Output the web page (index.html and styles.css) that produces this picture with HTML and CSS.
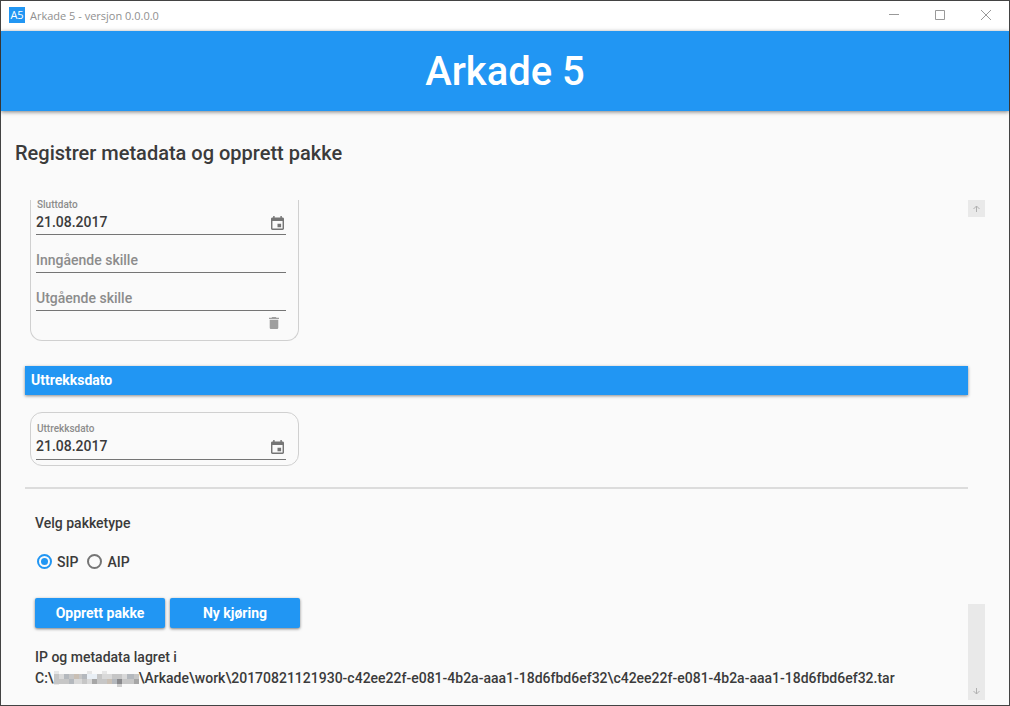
FILE: index.html
```html
<!DOCTYPE html>
<html lang="no">
<head>
<meta charset="utf-8">
<title>Arkade 5 - versjon 0.0.0.0</title>
<link rel="stylesheet" href="styles.css">
</head>
<body>
<div class="window">
  <div class="titlebar">
    <span class="app-icon">A5</span>
    <span class="window-title">Arkade 5 - versjon 0.0.0.0</span>
    <div class="window-controls">
      <button type="button" aria-label="Minimer"><svg width="10" height="10" viewBox="0 0 10 10"><path d="M0 4.5h10"/></svg></button>
      <button type="button" aria-label="Maksimer"><svg width="10" height="10" viewBox="0 0 10 10"><path d="M.5.5h9v9h-9z"/></svg></button>
      <button type="button" aria-label="Lukk"><svg width="10" height="10" viewBox="0 0 10 10"><path d="M0 0l10 10M10 0L0 10"/></svg></button>
    </div>
  </div>
  <header class="banner"><h1>Arkade 5</h1></header>
  <main class="page">
    <h2 class="page-title">Registrer metadata og opprett pakke</h2>
    <div class="scroll-area">
      <div class="content">
        <section class="card card-cut">
          <div class="field field-date">
            <label for="sluttdato">Sluttdato</label>
            <div class="input-row">
              <input id="sluttdato" type="text" value="21.08.2017">
              <button type="button" class="icon-button" aria-label="Velg sluttdato"><svg width="13" height="14" viewBox="3 1 18 20" preserveAspectRatio="none"><path d="M17 12h-5v5h5v-5zM16 1v2H8V1H6v2H5c-1.11 0-2 .9-2 2v14c0 1.1.89 2 2 2h14c1.1 0 2-.9 2-2V5c0-1.1-.9-2-2-2h-1V1h-2zm3 18H5V8h14v11z"/></svg></button>
            </div>
          </div>
          <div class="field"><input type="text" aria-label="Inngående skille" placeholder="Inngående skille"></div>
          <div class="field"><input type="text" aria-label="Utgående skille" placeholder="Utgående skille"></div>
          <div class="card-actions">
            <button type="button" class="icon-button delete" aria-label="Slett"><svg width="10" height="12" viewBox="5 3 14 18" preserveAspectRatio="none"><path d="M6 19c0 1.1.9 2 2 2h8c1.1 0 2-.9 2-2V7H6v12zM19 4h-3.5l-1-1h-5l-1 1H5v2h14V4z"/></svg></button>
          </div>
        </section>
        <h3 class="section-bar">Uttrekksdato</h3>
        <section class="card card-single">
          <div class="field field-date">
            <label for="uttrekksdato">Uttrekksdato</label>
            <div class="input-row">
              <input id="uttrekksdato" type="text" value="21.08.2017">
              <button type="button" class="icon-button" aria-label="Velg uttrekksdato"><svg width="13" height="14" viewBox="3 1 18 20" preserveAspectRatio="none"><path d="M17 12h-5v5h5v-5zM16 1v2H8V1H6v2H5c-1.11 0-2 .9-2 2v14c0 1.1.89 2 2 2h14c1.1 0 2-.9 2-2V5c0-1.1-.9-2-2-2h-1V1h-2zm3 18H5V8h14v11z"/></svg></button>
            </div>
          </div>
        </section>
        <hr class="divider">
        <div class="package">
          <p class="prompt">Velg pakketype</p>
          <div class="radios">
            <label><input type="radio" name="pakketype" checked>SIP</label>
            <label><input type="radio" name="pakketype">AIP</label>
          </div>
          <div class="buttons">
            <button type="button" class="action">Opprett pakke</button>
            <button type="button" class="action">Ny kjøring</button>
          </div>
          <p class="status">IP og metadata lagret i<br>C:\<svg class="redacted" width="85" height="16" viewBox="0 0 85 16" shape-rendering="crispEdges" aria-hidden="true">
            <path fill="#c6c6c6" d="M0 3h85v10H0z"/>
            <path fill="#e6e6e6" d="M0 0h5v3H0zM33 0h5v3h-5zM48 0h5v3h-5zM38 3h5v5h-5zM0 13h5v1H0z"/>
            <path fill="#d9d9d9" d="M5 3h5v5H5zM20 8h8v5h-8zM48 3h10v5H48zM33 8h5v5h-5zM68 3h5v5h-5z"/>
            <path fill="#b4b8bd" d="M10 3h5v5h-5zM28 3h5v5h-5zM15 8h5v5h-5zM58 8h5v5h-5zM73 3h7v5h-7z"/>
            <path fill="#a6a6a6" d="M38 8h5v5h-5zM80 8h5v5h-5z"/>
            <path fill="#c9bfb4" d="M20 3h5v5h-5zM53 8h5v5h-5z"/>
            <path fill="#89898c" d="M63 8h5v5h-5z"/>
            <path fill="#cfcfcf" d="M63 13h5v3h-5z"/>
            <path fill="#e9eff5" d="M38 8h-5V3h10v5z"/>
          </svg>\Arkade\work\20170821121930-c42ee22f-e081-4b2a-aaa1-18d6fbd6ef32\c42ee22f-e081-4b2a-aaa1-18d6fbd6ef32.tar</p>
        </div>
      </div>
      <div class="scrollbar">
        <button type="button" aria-label="Rull opp"><svg width="7" height="7" viewBox="0 0 7 7"><path d="M3.5 7V1M.5 4l3-3 3 3"/></svg></button>
        <div class="track"><button type="button" aria-label="Rull ned"><svg width="7" height="7" viewBox="0 0 7 7"><path d="M3.5 0v6M.5 3l3 3 3-3"/></svg></button></div>
      </div>
    </div>
  </main>
</div>
</body>
</html>
```
FILE: styles.css
```css
* { box-sizing: border-box; }
body {
  margin: 0;
  background: #fafafa;
  color: #3b3b3b;
  font: 500 14px/20px Roboto, sans-serif;
}
h1, h2, h3, p { margin: 0; font-weight: 500; }
button, input { font: inherit; color: inherit; }
button { border: 0; padding: 0; background: none; }
svg { display: block; }
.window {
  display: flex;
  flex-direction: column;
  min-height: 100vh;
  border: 1px solid #434343;
}
.titlebar {
  display: flex;
  align-items: center;
  height: 30px;
  padding: 0 0 2px 8px;
  background: #fff;
  font: 400 11px/16px "Open Sans", sans-serif;
  color: #909090;
}
.app-icon {
  width: 16px;
  height: 16px;
  margin-right: 5px;
  background: #2196f3;
  color: #fff;
  text-align: center;
}
.window-title { padding-top: 2px; }
.window-controls { display: flex; margin-left: auto; }
.window-controls button {
  display: grid;
  place-items: center;
  width: 46px;
  height: 28px;
}
.window-controls svg { fill: none; stroke: #999; }
.banner {
  background: #2196f3;
  color: #fff;
  text-align: center;
  padding: 17px 16px 15px;
  box-shadow: 0 1px 4px rgba(0, 0, 0, .5);
}
.banner h1 { font-size: 40px; line-height: 48px; }
.page {
  display: flex;
  flex-direction: column;
  flex: 1;
  padding: 30px 24px 5px 14px;
}
.page-title { font-size: 20px; line-height: 24px; }
.scroll-area { display: flex; flex: 1; margin: 35px 0 0 10px; }
.content { flex: 1; min-width: 0; }
.card {
  width: 269px;
  margin-left: 5px;
  padding: 0 12px 5px 5px;
  border: 1px solid #d0d0d0;
  border-radius: 12px;
}
.card-cut {
  border-top: 0;
  border-top-left-radius: 0;
  border-top-right-radius: 0;
}
.card-single { margin-top: 17px; padding-top: 11px; }
.card-single .field { padding-bottom: 1px; height: 36px; }
.field {
  display: flex;
  flex-direction: column;
  justify-content: flex-end;
  height: 38px;
  border-bottom: 1px solid #757575;
}
.field-date { height: 35px; }
.field label { font-size: 10px; line-height: 10px; color: #8c8c8c; padding-left: 1px; }
.field input {
  width: 100%;
  height: 24px;
  padding: 0;
  border: 0;
  outline: 0;
  background: none;
}
.field input::placeholder { color: #8c8c8c; opacity: 1; }
.input-row { display: flex; align-items: center; padding-right: 2px; }
.icon-button svg { fill: #757575; }
.input-row .icon-button { padding-top: 2px; }
.delete svg { fill: #9e9e9e; }
.card-actions { display: flex; justify-content: flex-end; padding: 6px 7px; }
.section-bar {
  margin-top: 25px;
  padding: 4px 6px 5px;
  background: #2196f3;
  color: #fff;
  font-size: 14px;
  font-weight: 700;
  box-shadow: 0 1px 3px rgba(0, 0, 0, .45);
}
.divider { height: 2px; margin: 21px 0 0; border: 0; background: #dcdcdc; }
.package { padding: 24px 10px 0; }
.radios { display: flex; gap: 9px; margin-top: 19px; }
.radios label { display: flex; align-items: center; gap: 5px; }
.radios input {
  appearance: none;
  display: grid;
  place-items: center;
  width: 15px;
  height: 15px;
  margin: 0 0 2px 2px;
  border: 2px solid #757575;
  border-radius: 50%;
}
.radios label + label input { margin-left: 0; }
.radios input:checked { border-color: #2196f3; }
.radios input:checked::before {
  content: "";
  width: 7px;
  height: 7px;
  border-radius: 50%;
  background: #2196f3;
}
.buttons { display: flex; gap: 5px; margin-top: 26px; }
.action {
  width: 130px;
  height: 30px;
  border-radius: 2px;
  background: #2196f3;
  color: #fff;
  font-weight: 700;
  box-shadow: 0 1px 3px rgba(0, 0, 0, .5);
}
.status { margin-top: 19px; line-height: 21px; }
.redacted { display: inline-block; vertical-align: -4px; }
.scrollbar {
  display: flex;
  flex-direction: column;
  justify-content: space-between;
  width: 17px;
}
.scrollbar button {
  display: grid;
  place-items: center;
  width: 17px;
  height: 17px;
  background: #e9e9e9;
}
.scrollbar svg { fill: none; stroke: #b0b0b0; }
.track {
  display: flex;
  align-items: flex-end;
  height: 96px;
  background: #e9e9e9;
}
```
